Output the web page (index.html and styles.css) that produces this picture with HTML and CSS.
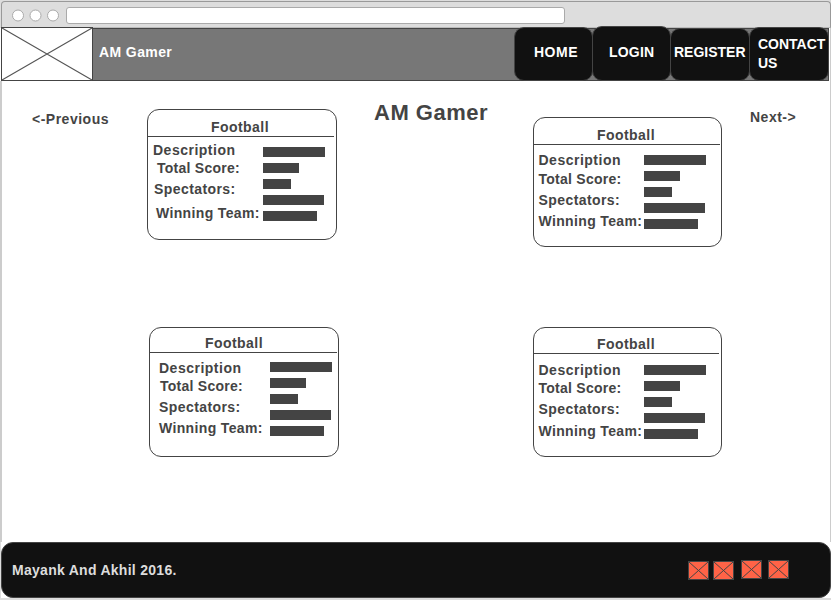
FILE: index.html
```html
<!DOCTYPE html>
<html lang="en">
<head>
<meta charset="utf-8">
<title>AM Gamer</title>
<link rel="stylesheet" href="styles.css">
</head>
<body>
<div class="browser">
  <div class="chrome">
    <svg class="dots" width="50" height="14" viewBox="0 0 50 14"><circle cx="6" cy="6.5" r="5.5"/><circle cx="23.5" cy="6.5" r="5.5"/><circle cx="41" cy="6.5" r="5.5"/></svg>
    <div class="address"></div>
  </div>
  <header class="header">
    <svg class="logo" width="92" height="54" viewBox="0 0 92 54"><rect x=".5" y=".5" width="91" height="53"/><path d="M1 1L91 53M1 53L91 1"/></svg>
    <div class="bar">
      <span class="brand">AM Gamer</span>
      <nav class="nav">
        <a class="tab home"><span>HOME</span></a>
        <a class="tab login"><span>LOGIN</span></a>
        <a class="tab register"><span>REGISTER</span></a>
        <a class="tab contact"><span>CONTACT US</span></a>
      </nav>
    </div>
  </header>
  <main class="main">
    <a class="prev">&lt;-Previous</a>
    <div class="column left">
      <section class="card one">
        <h2><span>Football</span></h2>
        <div class="details">
          <div class="labels"><span class="description">Description</span><span class="score">Total Score:</span><span class="spectators">Spectators:</span><span class="team">Winning Team:</span></div>
          <div class="values"><i class="w62"></i><i class="w36"></i><i class="w28"></i><i class="w61"></i><i class="w54"></i></div>
        </div>
      </section>
      <section class="card three">
        <h2><span>Football</span></h2>
        <div class="details">
          <div class="labels"><span class="description">Description</span><span class="score">Total Score:</span><span class="spectators">Spectators:</span><span class="team">Winning Team:</span></div>
          <div class="values"><i class="w62"></i><i class="w36"></i><i class="w28"></i><i class="w61"></i><i class="w54"></i></div>
        </div>
      </section>
    </div>
    <h1>AM Gamer</h1>
    <div class="column right">
      <section class="card two">
        <h2><span>Football</span></h2>
        <div class="details">
          <div class="labels"><span class="description">Description</span><span class="score">Total Score:</span><span class="spectators">Spectators:</span><span class="team">Winning Team:</span></div>
          <div class="values"><i class="w62"></i><i class="w36"></i><i class="w28"></i><i class="w61"></i><i class="w54"></i></div>
        </div>
      </section>
      <section class="card four">
        <h2><span>Football</span></h2>
        <div class="details">
          <div class="labels"><span class="description">Description</span><span class="score">Total Score:</span><span class="spectators">Spectators:</span><span class="team">Winning Team:</span></div>
          <div class="values"><i class="w62"></i><i class="w36"></i><i class="w28"></i><i class="w61"></i><i class="w54"></i></div>
        </div>
      </section>
    </div>
    <a class="next">Next-&gt;</a>
  </main>
  <footer class="footer">
    <span class="copyright">Mayank And Akhil 2016.</span>
    <div class="social">
      <svg class="low" width="21" height="19"><rect x=".5" y=".5" width="20" height="18"/><path d="M1 1L20 18M1 18L20 1"/></svg>
      <svg class="low second" width="21" height="19"><rect x=".5" y=".5" width="20" height="18"/><path d="M1 1L20 18M1 18L20 1"/></svg>
      <svg class="third" width="21" height="19"><rect x=".5" y=".5" width="20" height="18"/><path d="M1 1L20 18M1 18L20 1"/></svg>
      <svg class="fourth" width="21" height="19"><rect x=".5" y=".5" width="20" height="18"/><path d="M1 1L20 18M1 18L20 1"/></svg>
    </div>
  </footer>
</div>
</body>
</html>
```
FILE: styles.css
```css
* { box-sizing: border-box; }
body {
  margin: 0;
  width: 831px;
  height: 600px;
  overflow: hidden;
  background: #ddd;
  color: #444;
  font: bold 14px/16px "Liberation Sans", Arial, sans-serif;
}
h1, h2 { margin: 0; font-size: inherit; }
svg { display: block; flex: none; }
.browser { display: flex; flex-direction: column; height: 599px; padding-top: 1px; }
.chrome {
  display: flex;
  height: 27px;
  margin-left: 1px;
  padding: 5px 0 0 10px;
  border: 1px solid #999;
  border-bottom-color: #bbb;
  border-radius: 4px 4px 0 0;
  background: #ddd;
}
.dots { margin-top: 2px; fill: #fff; stroke: #aaa; }
.address { width: 499px; height: 17px; margin-left: 4px; border: 1px solid #aaa; border-radius: 3px; background: #fff; }
.header { display: flex; height: 53px; padding-left: 1px; background: #fff; border-right: 1px solid #ccc; }
.logo { margin-top: -1px; fill: #fff; stroke: #444; }
.logo path { stroke: #555; stroke-width: 1.1; }
.bar { display: flex; justify-content: space-between; width: 737px; margin-left: -1px; border: 1px solid #444; background: #777; }
.brand { padding: 15px 0 0 6px; color: #fff; letter-spacing: .4px; }
.nav { display: flex; align-items: flex-end; margin: -3px -1px -1px 0; }
.tab {
  display: flex;
  align-items: center;
  width: 79px;
  height: 53px;
  margin-left: -1px;
  border: 1px solid #444;
  border-radius: 10px;
  background: #111;
  color: #fff;
  line-height: 19px;
}
.home { height: 54px; padding: 0 0 3px 19px; letter-spacing: .5px; }
.login { height: 55px; padding: 0 0 2px 16px; letter-spacing: .2px; }
.register { width: 80px; padding: 0 0 4px 3px; letter-spacing: 0; }
.contact { width: 80px; height: 54px; padding: 0 0 1px 8px; letter-spacing: 0; }
.main { display: flex; align-items: flex-start; height: 461px; border-left: 2px solid #ccc; border-right: 1px solid #ccc; background: #fff; }
.prev { width: 115px; padding: 30px 0 0 30px; letter-spacing: .5px; }
.column { display: flex; flex-direction: column; }
.left { width: 192px; margin: 28px 0 0 30px; }
.right { width: 189px; margin-top: 36px; }
h1 { width: 159px; margin-left: 35px; padding-top: 19px; font-size: 22px; line-height: 26px; letter-spacing: .5px; white-space: nowrap; }
.next { margin-left: 28px; padding-top: 28px; letter-spacing: .5px; }
.card { width: 189px; height: 130px; border: 1px solid #444; border-radius: 12px; background: #fff; }
.card h2 { height: 26px; margin-right: 2px; padding: 8px 0 0 63px; border-bottom: 1px solid #444; letter-spacing: .45px; }
.details { display: flex; }
.labels { display: flex; flex-direction: column; width: 110px; padding-left: 4.5px; white-space: nowrap; }
.values { display: flex; flex-direction: column; gap: 6px; padding-top: 10px; }
.values i { height: 10px; background: #444; }
.w62 { width: 62px; }
.w36 { width: 36px; }
.w28 { width: 28px; }
.w61 { width: 61px; }
.w54 { width: 54px; }
.description { letter-spacing: .5px; }
.score { letter-spacing: .25px; }
.spectators { letter-spacing: .42px; }
.team { letter-spacing: .35px; }
.one { width: 190px; height: 131px; }
.one h2 { height: 27px; padding-top: 9px; }
.one .labels { width: 115px; padding: 5px 0 0 5px; }
.one .score { margin: 2px 0 0 4px; }
.one .spectators { margin: 5px 0 0 1px; }
.one .team { margin: 8px 0 0 3px; }
.two h2 { height: 27px; margin-right: 1px; padding-top: 9px; }
.two .labels { padding-top: 7px; }
.two .score { margin-top: 3px; }
.two .spectators { margin-top: 5px; }
.two .team { margin-top: 5px; }
.three { width: 190px; margin: 87px 0 0 2px; }
.three h2 { height: 25px; margin-right: 1px; padding: 7px 0 0 55px; }
.three .labels { width: 120px; padding: 7px 0 0 9px; }
.three .values { padding-top: 9px; }
.three .score { margin: 2px 0 0 1px; }
.three .spectators { margin-top: 5px; }
.three .team { margin-top: 5px; }
.four { margin-top: 80px; }
.four .values { padding-top: 11px; }
.four .labels { padding-top: 8px; }
.four .score { margin-top: 2px; }
.four .spectators { margin-top: 5px; }
.four .team { margin-top: 6px; }
.footer {
  display: flex;
  justify-content: space-between;
  height: 56px;
  margin-left: 1px;
  border: 1px solid #444;
  border-radius: 12px;
  background: #111;
  box-shadow: 0 0 0 12px #fff;
  clip-path: inset(0);
}
.copyright { padding: 19px 0 0 10px; color: #ddd; letter-spacing: .28px; }
.social { display: flex; margin-right: 41px; padding-top: 17px; }
.social svg { fill: #ff6347; stroke: #444; }
.low { margin-top: 1px; }
.second { margin-left: 4px; }
.third { margin-left: 7px; }
.fourth { margin-left: 6px; }
```
